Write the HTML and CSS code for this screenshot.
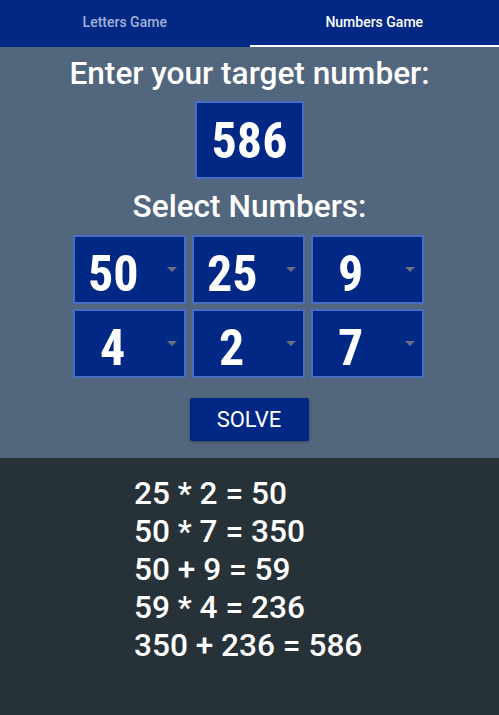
FILE: index.html
```html
<!DOCTYPE html>
<html>
<head>
<meta charset="utf-8">
<link rel="stylesheet" href="styles.css">
</head>
<body>
<nav class="tabs">
  <div class="tab">Letters Game</div>
  <div class="tab active">Numbers Game</div>
</nav>
<main class="panel">
  <h1 class="heading">Enter your target number:</h1>
  <div class="target">586</div>
  <h2 class="heading sub">Select Numbers:</h2>
  <div class="grid">
    <div class="sel"><span class="val">50</span><span class="arrow"></span></div>
    <div class="sel"><span class="val">25</span><span class="arrow"></span></div>
    <div class="sel"><span class="val one">9</span><span class="arrow"></span></div>
    <div class="sel"><span class="val one">4</span><span class="arrow"></span></div>
    <div class="sel"><span class="val one">2</span><span class="arrow"></span></div>
    <div class="sel"><span class="val one">7</span><span class="arrow"></span></div>
  </div>
  <button class="solve">SOLVE</button>
</main>
<section class="results">
  <div class="line">25 * 2 = 50</div>
  <div class="line">50 * 7 = 350</div>
  <div class="line">50 + 9 = 59</div>
  <div class="line">59 * 4 = 236</div>
  <div class="line">350 + 236 = 586</div>
</section>
</body>
</html>
```
FILE: styles.css
```css
html, body {
  margin: 0;
  padding: 0;
  height: 100%;
}
body {
  font-family: Roboto, "Noto Sans", sans-serif;
  background: #263238;
  display: flex;
  flex-direction: column;
}
.tabs {
  display: flex;
  background: #002884;
  height: 47px;
  flex: none;
}
.tab {
  flex: 1;
  display: flex;
  align-items: center;
  justify-content: center;
  font-size: 14px;
  font-weight: 500;
  color: #a3b0d8;
  box-sizing: border-box;
  padding-bottom: 3px;
}
.tab.active {
  color: #ffffff;
  border-bottom: 2px solid #ffffff;
  padding-bottom: 1px;
}
.panel {
  background: #52667e;
  display: flex;
  flex-direction: column;
  align-items: center;
  height: 411px;
  flex: none;
}
.heading {
  margin: 0;
  color: #ffffff;
  font-size: 31.6px;
  font-weight: 500;
  line-height: 36px;
  margin-top: 9px;
}
.sub {
  margin-top: 10px;
}
.target {
  margin-top: 9px;
  width: 109px;
  height: 78px;
  box-sizing: border-box;
  background: #002884;
  border: 2px solid #4a6dbf;
  color: #fff;
  font-family: "Roboto Condensed", "Liberation Sans Narrow", Roboto, sans-serif;
  font-weight: 700;
  font-size: 50px;
  display: flex;
  align-items: center;
  justify-content: center;
  padding-top: 1px;
}
.grid {
  margin-top: 10px;
  margin-right: 2px;
  display: grid;
  grid-template-columns: repeat(3, 113px);
  gap: 5px 6px;
}
.sel {
  height: 69px;
  box-sizing: border-box;
  background: #002884;
  border: 2px solid #4a6dbf;
  display: flex;
  align-items: center;
  position: relative;
  color: #fff;
  font-family: "Roboto Condensed", "Liberation Sans Narrow", Roboto, sans-serif;
  font-weight: 700;
  font-size: 50px;
  padding-top: 8px;
}
.val {
  padding-left: 13px;
}
.val.one {
  padding-left: 25px;
}
.arrow {
  position: absolute;
  right: 7px;
  top: 30px;
  width: 0;
  height: 0;
  border-left: 5px solid transparent;
  border-right: 5px solid transparent;
  border-top: 5px solid #6b6f80;
}
.solve {
  margin-top: 20px;
  margin-right: 1px;
  width: 119px;
  height: 43px;
  background: #002884;
  color: #fff;
  border: none;
  border-radius: 2px;
  font-family: Roboto, sans-serif;
  font-size: 22px;
  font-weight: 400;
  box-shadow: 0 1px 3px rgba(0,0,0,0.35);
}
.results {
  flex: 1;
  padding: 17px 0 0 134px;
}
.line {
  color: #fff;
  font-size: 31.6px;
  font-weight: 500;
  line-height: 38px;
}
```
